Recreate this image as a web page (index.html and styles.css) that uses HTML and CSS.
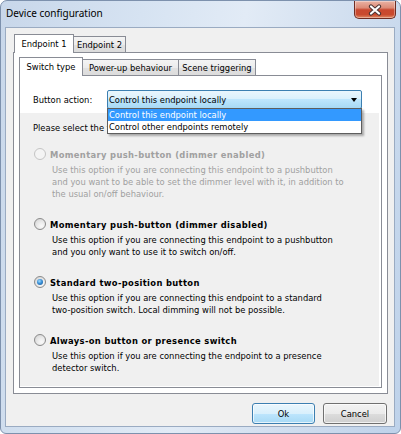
FILE: index.html
```html
<!DOCTYPE html>
<html>
<head>
<meta charset="utf-8">
<link rel="stylesheet" href="styles.css">
</head>
<body>
<div class="window">
  <div class="titlebar">
    <span class="title">Device configuration</span>
    <div class="close">
      <svg width="14" height="12" viewBox="0 0 14 12"><path d="M3 2.5 L11 9.5 M11 2.5 L3 9.5" stroke="#4a3434" stroke-width="4.2" stroke-linecap="round"/><path d="M3 2.5 L11 9.5 M11 2.5 L3 9.5" stroke="#fff" stroke-width="2.2" stroke-linecap="round"/></svg>
    </div>
  </div>
  <div class="client">
    <div class="tabctl outer">
      <div class="tabs">
        <div class="tab sel w-ep1">Endpoint 1</div>
        <div class="tab w-ep2">Endpoint 2</div>
      </div>
      <div class="panel outer-panel">
        <div class="tabctl inner">
          <div class="tabs inner-tabs">
            <div class="tab sel w-sw">Switch type</div>
            <div class="tab w-pu">Power-up behaviour</div>
            <div class="tab w-sc">Scene triggering</div>
          </div>
          <div class="panel inner-panel">
            <div class="action-row">
              <span class="label">Button action:</span>
              <div class="combo">
                <span class="combo-text">Control this endpoint locally</span>
                <span class="arrow"></span>
                <ul class="droplist">
                  <li class="item sel">Control this endpoint locally</li>
                  <li class="item">Control other endpoints remotely</li>
                </ul>
              </div>
            </div>
            <div class="options">
              <p class="intro">Please select the type of switch connected to this endpoint:</p>
              <div class="opt disabled">
                <div class="opt-head"><span class="radio"></span><span class="opt-title">Momentary push-button (dimmer enabled)</span></div>
                <p class="desc">Use this option if you are connecting this endpoint to a pushbutton<br>and you want to be able to set the dimmer level with it, in addition to<br>the usual on/off behaviour.</p>
              </div>
              <div class="opt">
                <div class="opt-head"><span class="radio"></span><span class="opt-title">Momentary push-button (dimmer disabled)</span></div>
                <p class="desc">Use this option if you are connecting this endpoint to a pushbutton<br>and you only want to use it to switch on/off.</p>
              </div>
              <div class="opt">
                <div class="opt-head"><span class="radio checked"></span><span class="opt-title">Standard two-position button</span></div>
                <p class="desc">Use this option if you are connecting this endpoint to a standard<br>two-position switch. Local dimming will not be possible.</p>
              </div>
              <div class="opt">
                <div class="opt-head"><span class="radio"></span><span class="opt-title">Always-on button or presence switch</span></div>
                <p class="desc">Use this option if you are connecting the endpoint to a presence<br>detector switch.</p>
              </div>
            </div>
          </div>
        </div>
      </div>
    </div>
    <div class="buttons">
      <button class="btn default w-ok">Ok</button>
      <button class="btn w-cancel">Cancel</button>
    </div>
  </div>
</div>
</body>
</html>
```
FILE: styles.css
```css
html, body {
  margin: 0;
  padding: 0;
}
body {
  width: 401px;
  height: 434px;
  overflow: hidden;
  background: #ffffff;
  font-family: "DejaVu Sans Condensed", "DejaVu Sans", sans-serif;
  font-stretch: condensed;
  font-size: 9.3px;
  color: #000;
}
.window {
  width: 401px;
  height: 434px;
  box-sizing: border-box;
  border: 1px solid #7d91ad;
  border-radius: 7px 7px 6px 6px;
  background: linear-gradient(100deg, #c8d7ea 0%, #d6e3f2 30%, #e2ebf6 52%, #d3e0f0 72%, #bed2ea 100%);
  padding: 0 5px 6px 4px;
  display: flex;
  flex-direction: column;
}
.titlebar {
  height: 26px;
  display: flex;
  justify-content: space-between;
  align-items: flex-start;
}
.title {
  font-family: "Noto Sans", "Open Sans", sans-serif;
  font-stretch: normal;
  font-size: 10px;
  line-height: 13px;
  padding: 6px 0 0 1px;
  color: #000;
}
.close {
  width: 42px;
  height: 18px;
  box-sizing: border-box;
  margin-right: -1px;
  border: 1px solid #6e2c22;
  border-top: none;
  border-radius: 0 0 5px 5px;
  background: linear-gradient(#eab3a4 0%, #dc8b77 40%, #c9482f 52%, #c94a2e 80%, #e08a64 100%);
  box-shadow: inset 0 0 0 1px rgba(255, 255, 255, 0.35);
  display: flex;
  align-items: center;
  justify-content: center;
}
.close svg {
  display: block;
}
.client {
  flex: 1;
  background: #f0f0f0;
  border: 1px solid #9aabc2;
  padding: 6px 6px 0 7px;
  display: flex;
  flex-direction: column;
}
.tabctl {
  display: flex;
  flex-direction: column;
}
.tabctl.outer {
  height: 360px;
}
.tabctl.inner {
  flex: 1;
}
.tabs {
  display: flex;
  align-items: flex-end;
  height: 18px;
  padding-left: 1px;
  position: relative;
  z-index: 1;
}
.tabs.inner-tabs {
  padding-left: 0;
}
.tab {
  height: 16px;
  box-sizing: border-box;
  border: 1px solid #898c95;
  border-bottom: none;
  border-left: none;
  background: linear-gradient(#f4f4f4 0%, #ececec 50%, #e1e1e1 52%, #dcdcdc 100%);
  text-align: center;
  line-height: 15px;
  white-space: nowrap;
}
.tab.sel {
  height: 19px;
  margin-bottom: -1px;
  border-left: 1px solid #898c95;
  background: #fff;
  line-height: 18px;
}
.w-ep1 { width: 60px; }
.w-ep2 { width: 52px; }
.w-sw { width: 64px; }
.w-pu { width: 96px; }
.w-sc { width: 77px; }
.panel {
  flex: 1;
  border: 1px solid #898c95;
  background: #fff;
  display: flex;
  flex-direction: column;
}
.outer-panel {
  padding: 4px 5px 5px 5px;
}
.action-row {
  height: 37px;
  box-sizing: border-box;
  padding: 14px 0 0 13px;
  display: flex;
  align-items: flex-start;
}
.label {
  width: 74px;
  line-height: 19px;
}
.combo {
  position: relative;
  width: 255px;
  height: 19px;
  box-sizing: border-box;
  border: 1px solid #3c7fb1;
  border-radius: 2px;
  background: linear-gradient(#eaf6fd 0%, #d9f0fc 50%, #bee6fd 50%, #a7d9f5 100%);
  display: flex;
  align-items: center;
  justify-content: space-between;
  padding: 0 4px 0 1px;
}
.combo-text {
  line-height: 17px;
}
.arrow {
  width: 0;
  height: 0;
  border-left: 3.5px solid transparent;
  border-right: 3.5px solid transparent;
  border-top: 4px solid #000;
}
.droplist {
  position: absolute;
  left: -1px;
  top: 17px;
  width: 255px;
  box-sizing: border-box;
  margin: 0;
  padding: 0;
  list-style: none;
  background: #fff;
  border: 1px solid #5e5e5e;
  box-shadow: 2px 2px 2px rgba(0, 0, 0, 0.3);
}
.item {
  height: 12px;
  line-height: 12px;
  padding-left: 1px;
  white-space: nowrap;
}
.item.sel {
  background: #3399ff;
  color: #fff;
}
.options {
  flex: 1;
  margin: 0 2px 1px 0;
  background: #f0f0f0;
  padding: 8px 0 0 13px;
  display: flex;
  flex-direction: column;
  gap: 17px;
}
.intro {
  margin: 0 0 -4px 0;
  line-height: 13px;
}
.opt-head {
  display: flex;
  align-items: center;
  height: 14px;
  margin-left: 1px;
  gap: 4px;
}
.opt-title {
  font-weight: bold;
  letter-spacing: 0.35px;
  white-space: nowrap;
}
.radio {
  width: 12px;
  height: 12px;
  box-sizing: border-box;
  border-radius: 50%;
  border: 1px solid #8a8a8a;
  background: radial-gradient(circle at 65% 70%, #fafafa 0%, #e9e9e9 45%, #cfcfcf 100%);
  display: flex;
  align-items: center;
  justify-content: center;
  flex: none;
}
.radio.checked::after {
  content: "";
  width: 6px;
  height: 6px;
  border-radius: 50%;
  background: radial-gradient(circle at 40% 35%, #9fdcff 0%, #3a8fd6 45%, #14508f 100%);
}
.disabled .radio {
  border-color: #c4c4c4;
  background: #f4f4f4;
}
.disabled {
  color: #a0a0a0;
}
.desc {
  margin: 3px 0 0 19px;
  line-height: 12px;
  white-space: nowrap;
}
.buttons {
  display: flex;
  justify-content: flex-end;
  gap: 8px;
  margin-top: 9px;
  padding-right: 1px;
}
.btn {
  height: 21px;
  box-sizing: border-box;
  border: 1px solid #707070;
  border-radius: 3px;
  background: linear-gradient(#f2f2f2 0%, #ebebeb 50%, #dddddd 50%, #cfcfcf 100%);
  box-shadow: inset 0 0 0 1px rgba(255, 255, 255, 0.7);
  font-family: inherit;
  font-stretch: condensed;
  font-size: 9.3px;
  color: #000;
  padding: 0;
}
.btn.default {
  border-color: #3c7fb1;
  background: linear-gradient(#eaf6fd 0%, #d9f0fc 50%, #bee6fd 50%, #a7d9f5 100%);
}
.w-ok { width: 63px; }
.w-cancel { width: 64px; }
```
